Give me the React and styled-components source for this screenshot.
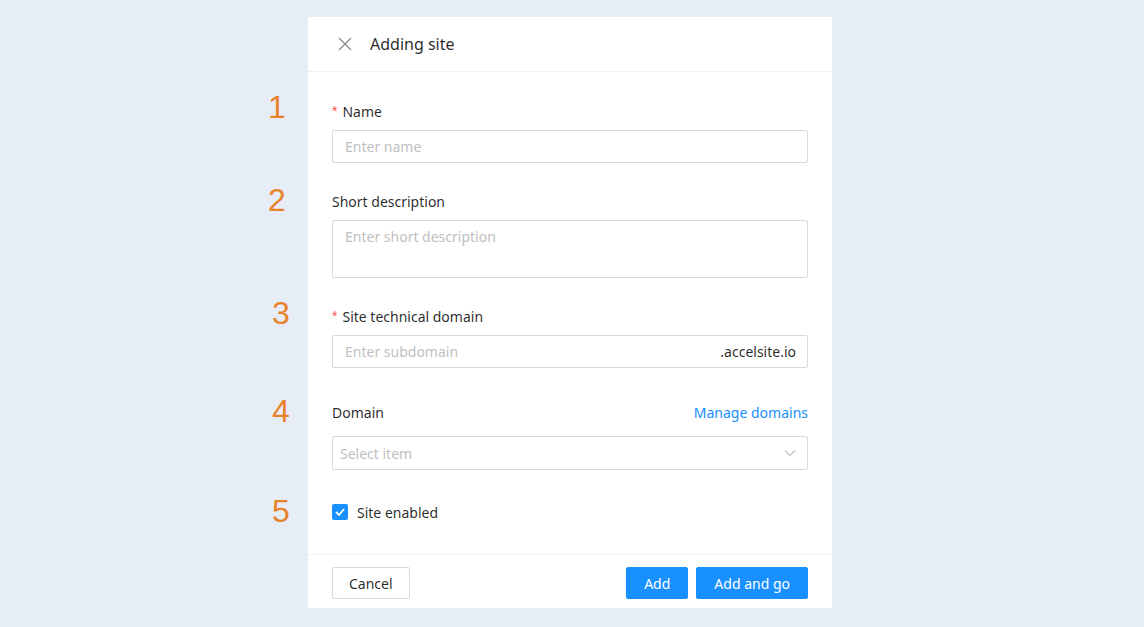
import React from 'react';
import styled, { createGlobalStyle } from 'styled-components';

const GlobalStyle = createGlobalStyle`
  html, body {
    margin: 0;
    padding: 0;
    background: #e6edf6;
  }
  body {
    font-family: "Noto Sans", "Open Sans", sans-serif;
    font-size: 14px;
    color: rgba(0, 0, 0, 0.85);
  }
  * {
    box-sizing: border-box;
  }
`;

const Page = styled.div`
  min-height: 627px;
  padding: 17px 0 0 308px;
`;

const Panel = styled.div`
  width: 524px;
  background: #fff;
`;

const Header = styled.div`
  display: flex;
  align-items: center;
  height: 55px;
  padding: 0 24px 0 30px;
  border-bottom: 1px solid #f0f0f0;
`;

const CloseButton = styled.button`
  display: flex;
  align-items: center;
  justify-content: center;
  width: 14px;
  height: 14px;
  padding: 0;
  margin-right: 18px;
  border: none;
  background: none;
  color: #8c8c8c;
  cursor: pointer;
`;

const Title = styled.div`
  font-size: 16px;
  color: rgba(0, 0, 0, 0.85);
`;

const Body = styled.div`
  padding: 28px 24px 31px;
`;

const FormItem = styled.div`
  position: relative;
  margin-bottom: ${(p) => p.$gap ?? 27}px;
`;

const Marker = styled.span`
  position: absolute;
  left: ${(p) => p.$left}px;
  top: ${(p) => p.$top ?? -6}px;
  font-family: "Liberation Sans", Arial, sans-serif;
  font-size: 32px;
  line-height: 32px;
  color: #e8822b;
`;

const LabelRow = styled.div`
  display: flex;
  align-items: center;
  justify-content: space-between;
  height: ${(p) => p.$height ?? 22}px;
  margin-bottom: 8px;
`;

const Label = styled.label`
  display: flex;
  align-items: center;
  color: rgba(0, 0, 0, 0.85);
`;

const Required = styled.span`
  color: #ff4d4f;
  font-family: SimSun, sans-serif;
  font-size: 14px;
  margin-right: 5px;
`;

const LinkButton = styled.a`
  color: #1890ff;
  text-decoration: none;
  cursor: pointer;
`;

const Input = styled.input`
  display: block;
  width: 100%;
  height: 33px;
  padding: 4px 12px;
  font: inherit;
  color: rgba(0, 0, 0, 0.85);
  border: 1px solid #d9d9d9;
  border-radius: 2px;
  outline: none;
  &::placeholder {
    color: #bfbfbf;
  }
`;

const TextArea = styled.textarea`
  display: block;
  width: 100%;
  height: 58px;
  padding: 5px 12px;
  font: inherit;
  line-height: 22px;
  resize: none;
  border: 1px solid #d9d9d9;
  border-radius: 2px;
  outline: none;
  &::placeholder {
    color: #bfbfbf;
  }
`;

const AffixWrap = styled.div`
  display: flex;
  align-items: center;
  height: 33px;
  padding: 0 11px 0 12px;
  border: 1px solid #d9d9d9;
  border-radius: 2px;
`;

const BareInput = styled.input`
  flex: 1;
  min-width: 0;
  padding: 0;
  border: none;
  outline: none;
  font: inherit;
  &::placeholder {
    color: #bfbfbf;
  }
`;

const Suffix = styled.span`
  color: rgba(0, 0, 0, 0.85);
`;

const Select = styled.div`
  display: flex;
  align-items: center;
  justify-content: space-between;
  height: 34px;
  padding: 0 11px 0 7px;
  border: 1px solid #d9d9d9;
  border-radius: 2px;
  color: #bfbfbf;
  cursor: pointer;
`;

const Check = styled.label`
  display: flex;
  align-items: center;
  gap: 9px;
  height: 22px;
  cursor: pointer;
`;

const Box = styled.span`
  display: flex;
  align-items: center;
  justify-content: center;
  width: 16px;
  height: 16px;
  border-radius: 2px;
  background: #1890ff;
`;

const Footer = styled.div`
  display: flex;
  align-items: center;
  justify-content: space-between;
  padding: 12px 24px 9px;
  border-top: 1px solid #f0f0f0;
`;

const Actions = styled.div`
  display: flex;
  gap: 8px;
`;

const Button = styled.button`
  height: 32px;
  padding: 0 ${(p) => (p.$primary ? 17 : 16)}px;
  font: inherit;
  font-size: 14px;
  border-radius: 2px;
  cursor: pointer;
  border: 1px solid ${(p) => (p.$primary ? '#1890ff' : '#d9d9d9')};
  background: ${(p) => (p.$primary ? '#1890ff' : '#fff')};
  color: ${(p) => (p.$primary ? '#fff' : 'rgba(0, 0, 0, 0.85)')};
`;

const App = () => (
  <Page>
    <GlobalStyle />
    <Panel>
      <Header>
        <CloseButton aria-label="Close">
          <svg width="14" height="14" viewBox="0 0 14 14" fill="none" stroke="currentColor" strokeWidth="1.3">
            <path d="M1 1 L13 13 M13 1 L1 13" />
          </svg>
        </CloseButton>
        <Title>Adding site</Title>
      </Header>

      <Body>
        <FormItem>
          <Marker $left={-64} $top={-9}>1</Marker>
          <LabelRow>
            <Label><Required>*</Required>Name</Label>
          </LabelRow>
          <Input placeholder="Enter name" />
        </FormItem>

        <FormItem>
          <Marker $left={-64}>2</Marker>
          <LabelRow>
            <Label>Short description</Label>
          </LabelRow>
          <TextArea placeholder="Enter short description" />
        </FormItem>

        <FormItem $gap={28}>
          <Marker $left={-60} $top={-8}>3</Marker>
          <LabelRow>
            <Label><Required>*</Required>Site technical domain</Label>
          </LabelRow>
          <AffixWrap>
            <BareInput placeholder="Enter subdomain" />
            <Suffix>.accelsite.io</Suffix>
          </AffixWrap>
        </FormItem>

        <FormItem $gap={31}>
          <Marker $left={-60} $top={-1}>4</Marker>
          <LabelRow $height={32}>
            <Label>Domain</Label>
            <LinkButton>Manage domains</LinkButton>
          </LabelRow>
          <Select>
            <span>Select item</span>
            <svg width="12" height="12" viewBox="0 0 12 12" fill="none" stroke="#bfbfbf" strokeWidth="1.1">
              <path d="M1 3.5 L6 8.5 L11 3.5" />
            </svg>
          </Select>
        </FormItem>

        <FormItem $gap={0}>
          <Marker $left={-60} $top={-6}>5</Marker>
          <Check>
            <Box>
              <svg width="10" height="8" viewBox="0 0 10 8" fill="none" stroke="#fff" strokeWidth="1.8">
                <path d="M1 4 L4 7 L9 1" />
              </svg>
            </Box>
            Site enabled
          </Check>
        </FormItem>
      </Body>

      <Footer>
        <Button>Cancel</Button>
        <Actions>
          <Button $primary>Add</Button>
          <Button $primary>Add and go</Button>
        </Actions>
      </Footer>
    </Panel>
  </Page>
);

export default App;
